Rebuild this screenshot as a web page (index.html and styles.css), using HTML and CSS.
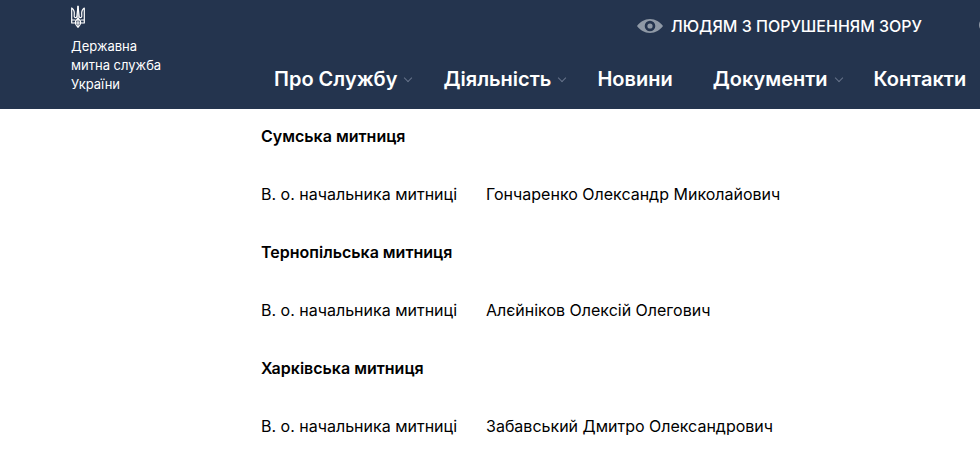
FILE: index.html
```html
<!DOCTYPE html>
<html lang="uk">
  <head>
    <meta charset="UTF-8" />
    <meta name="viewport" content="width=device-width, initial-scale=1.0" />
    <title>Державна митна служба України</title>
    <link rel="stylesheet" href="styles.css">
  </head>
  <body>
    <header class="header">
      <a class="logo" href="#">
        <svg class="trident" viewBox="0 0 14 24" fill="none" stroke="#fff" stroke-width="1.2" stroke-linejoin="round">
          <path d="M.7 3v15h3.600c.3 2 1.300 3 2.700 4.400 1.400-1.400 2.400-2.400 2.700-4.400h3.600V3c-2.200 1.500-2.800 3.600-2.600 6 .1 1.700.6 3-.6 3.500-1.600.5-2.100-.6-2.100-2.500L7 1 6 10c0 1.900-.5 3-2.100 2.500C2.700 12 3.200 10.700 3.300 9 3.500 6.600 2.900 4.500.7 3z" />
          <path d="M7 1v21M4.300 18c0-2 1-3 2.700-5 1.700 2 2.700 3 2.700 5M1 15h3.500M9.500 15H13M4.300 18h5.400" />
        </svg>
        <span>Державна<br />митна служба<br />України</span>
      </a>
      <div class="header-main">
        <div class="top-bar">
          <a class="vision" href="#">
            <svg class="eye" viewBox="0 0 26 14">
              <path fill="#8f99a6" fill-rule="evenodd" d="M0 7C3 3 7.500 0 13 0s10 3 13 7c-3 4-7.500 7-13 7S3 11 0 7zm13-5.300a5.300 5.300 0 1 0 0 10.600 5.300 5.300 0 0 0 0-10.600z" />
              <circle cx="13" cy="7" r="2.600" fill="#8f99a6" />
            </svg>
            Людям з порушенням зору
          </a>
          <button class="search" aria-label="Пошук">
            <svg viewBox="0 0 18 18" fill="none" stroke="#8f99a6" stroke-width="2">
              <circle cx="8" cy="8" r="6" />
              <path d="M12.500 12.500l4 4" />
            </svg>
          </button>
        </div>
        <nav class="menu">
          <a class="has-sub" href="#">Про Службу</a>
          <a class="has-sub" href="#">Діяльність</a>
          <a href="#">Новини</a>
          <a class="has-sub" href="#">Документи</a>
          <a href="#">Контакти</a>
        </nav>
      </div>
    </header>
    <main class="content">
      <table class="staff">
        <tbody>
          <tr>
            <th colspan="2">Сумська митниця</th>
          </tr>
          <tr>
            <td>В. о. начальника митниці</td>
            <td>Гончаренко Олександр Миколайович</td>
          </tr>
          <tr>
            <th colspan="2">Тернопільська митниця</th>
          </tr>
          <tr>
            <td>В. о. начальника митниці</td>
            <td>Алєйніков Олексій Олегович</td>
          </tr>
          <tr>
            <th colspan="2">Харківська митниця</th>
          </tr>
          <tr>
            <td>В. о. начальника митниці</td>
            <td>Забавський Дмитро Олександрович</td>
          </tr>
        </tbody>
      </table>
    </main>
  </body>
</html>
```
FILE: styles.css
```css
* {
  box-sizing: border-box;
}
body {
  margin: 0;
  font-family: Inter, "Liberation Sans", sans-serif;
  color: #000;
  background: #fff;
}
a {
  color: #fff;
  text-decoration: none;
}
.header {
  display: flex;
  padding: 5px 0 15px 71px;
  background: #24344e;
  overflow: hidden;
}
.logo {
  flex: 0 0 203px;
  font-size: 13px;
  line-height: 19px;
}
.trident {
  display: block;
  width: 14px;
  height: 24px;
  margin-bottom: 8px;
}
.header-main {
  flex: 1;
  min-width: 0;
}
.top-bar {
  display: flex;
  justify-content: flex-end;
  align-items: center;
  gap: 56px;
  height: 42px;
  margin-right: -16px;
}
.vision {
  display: flex;
  align-items: center;
  gap: 8px;
  font-size: 16px;
  font-weight: 500;
  text-transform: uppercase;
  white-space: nowrap;
}
.eye {
  width: 26px;
  height: 14px;
}
.search {
  width: 18px;
  height: 18px;
  padding: 0;
  border: none;
  background: none;
}
.search svg {
  display: block;
}
.menu {
  display: flex;
  gap: 32px;
  margin-top: 20px;
  font-size: 20px;
  font-weight: 600;
  line-height: 24px;
  white-space: nowrap;
}
.menu a {
  display: flex;
  align-items: center;
  gap: 8px;
  padding-right: 8px;
}
.menu .has-sub {
  padding-right: 0;
}
.has-sub::after {
  content: "";
  width: 5px;
  height: 5px;
  margin-bottom: 3px;
  border: solid #66728a;
  border-width: 0 1px 1px 0;
  transform: rotate(45deg);
}
.content {
  padding: 15px 0 0 261px;
}
.staff {
  border-collapse: collapse;
  font-size: 16px;
  line-height: 24px;
  text-align: left;
}
.staff th,
.staff td {
  padding: 0 29px 34px 0;
}
.staff th {
  font-weight: 600;
}
```
